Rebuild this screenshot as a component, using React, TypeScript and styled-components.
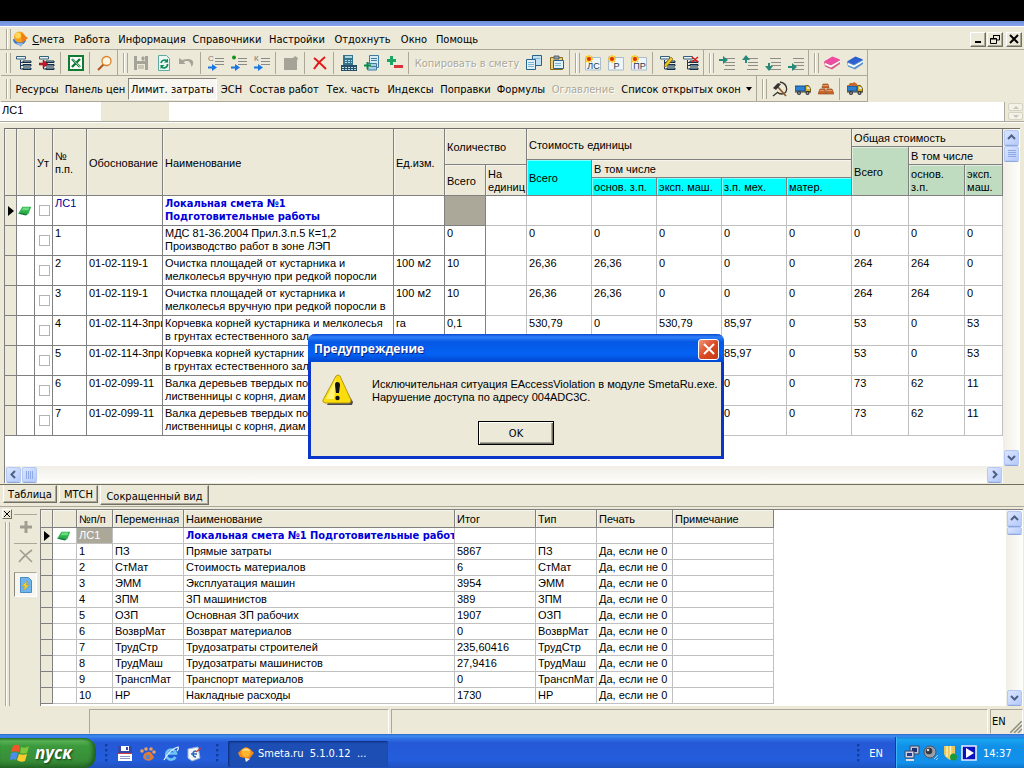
import React from "react";
import styled, { createGlobalStyle, css } from "styled-components";

const face = "#ece9d8";
const shade = "#aca899";
const uiFont = `"DejaVu Sans Condensed", "Liberation Sans", sans-serif`;
const gridFont = `"Liberation Sans", Arial, sans-serif`;

const Global = createGlobalStyle`
  *, *::before, *::after { box-sizing: border-box; }
  body { margin: 0; background: ${face}; }
  button, input { font: inherit; color: inherit; margin: 0; }
  svg { display: block; flex: none; }
`;

/* ---------- icons ---------- */

const tree = (
  <>
    <path d="M4.500 5v9H7M4.500 7.500H7M4.500 10.500H7" fill="none" stroke="#1e3a58" />
    <path d="M.500 1.500h9v2.500h-9z" fill="#eef4f6" stroke="#35607c" />
    <path d="M7 6h8v1.500H7zM7 9.500h8v1.500H7zM7 13h8v1.500H7z" fill="#a9d3e4" stroke="#142c44" />
  </>
);
const star = (
  <>
    <path d="M4 0v8M0 4h8M1 1l6 6M7 1L1 7" stroke="#ffc400" strokeWidth="1.4" />
    <circle cx="4" cy="4" r="2" fill="#e03000" />
  </>
);
const estimate = (t: string) => (
  <>
    <path d="M.500 2.500h15v12.500h-15z" fill="#eef5fb" stroke="#a9bccb" />
    <text x="8.5" y="13.5" fontSize="9" textAnchor="middle" fill="#1f3c50" fontFamily="Liberation Sans">{t}</text>
    {star}
  </>
);
const blueArrow = <path d="M0 11.500h4V9l5 3.500L4 16v-2.500H0z" fill="#1878e0" />;
const insertLines = <path d="M7 3.500h9M7 6.500h9M7 9.500h9" stroke="#8a8a86" />;
const levelLines = <path d="M5 3.500h11M6 7.500h10M6 10.500h10M5 14.500h11" stroke="#8d8d86" />;
const book = (top: string, side: string) => (
  <>
    <path d="M0 7l8-5 8 3v4l-8 5.500-7-3z" fill={side} />
    <path d="M0 6.500L8.500 1.500 16 4.500 7 9.500z" fill={top} />
    <path d="M1 8l6 2.500 9-5V7l-9 5.500L1 10z" fill="#fff" />
  </>
);
const truck = (
  <>
    <path d="M0 5h10v5H0z" fill="#2d7fd0" stroke="#174f88" />
    <path d="M10.500 4.500h3l2 3v3h-5z" fill="#d9b32c" stroke="#775f18" />
    <path d="M12 6h2l1 2h-3z" fill="#cfe8f6" />
    <path d="M0 11h16" stroke="#333" />
    <circle cx="4" cy="12" r="2" fill="#333" /><circle cx="12.5" cy="12" r="2" fill="#333" />
    <circle cx="4" cy="12" r=".8" fill="#ccc" /><circle cx="12.5" cy="12" r=".8" fill="#ccc" />
  </>
);

const icons: Record<string, React.ReactNode> = {
  app: (
    <>
      <path d="M1 8a6 5 0 0 0 13 1z" fill="#3b7bd0" />
      <path d="M4 12l5 4 2-4z" fill="#8fb5e6" />
      <circle cx="7.5" cy="6" r="5.5" fill="#f6a21c" />
      <path d="M9 2l7 5-6 5z" fill="#f07f12" />
      <circle cx="6" cy="4.5" r="3" fill="#ffd75a" />
    </>
  ),
  sun: (
    <>
      <path d="M0 7l4-4 4-2 4 2 4 4-4 5-4 4-1-4-5-1z" fill="#f08a18" />
      <circle cx="8" cy="6.500" r="4.500" fill="#ffb52e" />
      <path d="M4 5c2-3 6-3 8 0-3-1-5-1-8 0z" fill="#ffe9a0" />
      <path d="M7 12l5 1-4 3z" fill="#e4ecf8" />
    </>
  ),
  tree,
  treeInsert: <>{tree}<path d="M0 8h4V5l5 4-5 4v-3H0z" fill="#c21c2c" stroke="#7d0c1c" strokeWidth=".5" /></>,
  excel: (
    <>
      <path d="M1 1h14v14H1z" fill="#fff" stroke="#0e7a32" strokeWidth="2" />
      <path d="M4 4l8 8M12 4l-8 8" stroke="#0e7a32" strokeWidth="2.400" />
      <path d="M4 3.500l8 8.500" stroke="#fff" strokeWidth=".7" />
    </>
  ),
  find: (
    <>
      <path d="M6.500 9.500L1 15" stroke="#b5541c" strokeWidth="2" />
      <circle cx="9.500" cy="6" r="4.500" fill="#fdf6e2" stroke="#d9822b" strokeWidth="1.300" />
    </>
  ),
  save: (
    <>
      <path d="M1 1h14v14H1z" fill="#a5a297" />
      <path d="M4 1h8v5H4zM4 9h8v6H4z" fill={face} /><path d="M9 2h2v3H9zM5 11h6M5 13h6" fill="#a5a297" stroke="#a5a297" />
    </>
  ),
  refresh: (
    <>
      <path d="M2.500.500h8l3 3v12h-11z" fill="#e9f6f4" stroke="#5ea9a4" />
      <path d="M11 6a3.600 3.600 0 0 0-6 2M5.500 12a3.600 3.600 0 0 0 6-3" fill="none" stroke="#0d8a54" strokeWidth="1.600" />
      <path d="M12 3.500v4H8zM4.500 14v-4h4z" fill="#0d8a54" />
    </>
  ),
  undo: <path d="M0 3v6h6.500L4.500 7C8 5 12 6 12.500 12c4.500-6 0-10-9.500-7z" fill="#a5a297" />,
  insertC: <>{insertLines}<text x="0" y="6" fontSize="8" fill="#777" fontFamily="Liberation Sans">C</text>{blueArrow}</>,
  insertDot: <>{insertLines}<circle cx="3" cy="2.500" r="2" fill="#169016" />{blueArrow}</>,
  insertK: <>{insertLines}<text x="0" y="6" fontSize="8" fill="#777" fontFamily="Liberation Sans">К</text>{blueArrow}</>,
  edit: <path d="M1 3h9l2-2 3 2-1 3v9H1z" fill="#a5a297" />,
  remove: <path d="M2 3c4 3 8 7 12 11M13 2C9 5 5 9 2 14" fill="none" stroke="#e01818" strokeWidth="2" />,
  calc: (
    <>
      <path d="M2 0h10v10H2z" fill="#33758f" /><path d="M4 1h7v2H4z" fill="#a9d4e0" />
      <path d="M0 10h16v6H0z" fill="#274f68" />
      <path d="M1 12.500h14M1 14.500h14M4 5.500h7M4 7.500h7" stroke="#b8dbe8" strokeDasharray="2 1" />
    </>
  ),
  docPlus: (
    <>
      <path d="M5.500.500h9v12h-9z" fill="#d5ebf5" stroke="#3f7c9f" />
      <path d="M3.500 8.500h9v6.500h-9z" fill="#a8cfe3" stroke="#3f7c9f" />
      <path d="M7 3.500h6M7 5.500h6M7 11.500h5" stroke="#3f7c9f" />
      <path d="M3.500 7v7M0 10.500h7" stroke="#0d8a48" strokeWidth="2" />
    </>
  ),
  plusMinus: (
    <>
      <path d="M4.500 1v9M0 5.500h9" stroke="#1ba562" strokeWidth="3" />
      <path d="M7 10h9v3H7z" fill="#d8323c" />
    </>
  ),
  copy: (
    <>
      <path d="M6.500.500h9v10h-9z" fill="#bfe1f2" stroke="#27638a" />
      <path d="M.500 4.500h9v10h-9z" fill="#dff1fa" stroke="#27638a" />
      <path d="M2 7.500h6M2 9.500h6M2 11.500h6M8 3.500h6" stroke="#7fb4d2" />
    </>
  ),
  paste: (
    <>
      <path d="M1.500 2.500h12v12h-12z" fill="#e8cf7e" stroke="#8b6a1c" />
      <path d="M5 1h5v3H5z" fill="#90a0a8" stroke="#56646c" />
      <path d="M4.500 5.500h10v8h-10z" fill="#dff1fa" stroke="#27638a" />
      <path d="M6 8.500h6M6 10.500h6" stroke="#7fb4d2" />
    </>
  ),
  estLS: estimate("ЛС"),
  estR: estimate("Р"),
  estPR: estimate("ПР"),
  treeEdit: <>{tree}<path d="M4 12l1-3 6-7 2 2-6 7z" fill="#f4c81c" stroke="#7b5b00" strokeWidth=".6" /></>,
  treeRemove: <>{tree}<path d="M9 2l6 5M15 2L9 7" stroke="#e01818" strokeWidth="1.500" /></>,
  levelRight: <>{levelLines}<path d="M0 4h4V1l5 4-5 4V6H0z" fill="#26897a" /></>,
  levelUp: <>{levelLines}<path d="M3 8V5H0l4-5 4 5H5v3z" fill="#26897a" /></>,
  levelDown: <>{levelLines}<path d="M3 8v3H0l4 5 4-5H5V8z" fill="#26897a" /></>,
  levelIn: <>{levelLines}<path d="M0 11h4V8l5 4-5 4v-3H0z" fill="#26897a" /></>,
  bookPink: book("#f04aa2", "#d6608c"),
  bookBlue: book("#2f5fcf", "#5f93cc"),
  labor: (
    <>
      <path d="M8 1c9 2 8 12 2 12-2 0-4-1-5-2M6 11l-5 4" fill="none" stroke="#3a332a" strokeWidth="1.300" />
      <path d="M5 5l9 10" stroke="#8b5a2a" strokeWidth="1.800" />
      <path d="M1 7l5-5 3 1-5 6z" fill="#333" />
    </>
  ),
  truck,
  bricks: (
    <>
      <path d="M5 3h5l1 4H4zM0 13l2-5h5l1 5zM8 13l1-5h5l2 5z" fill="#c8672a" stroke="#8f4419" strokeWidth=".6" />
      <path d="M5 4.500h5M2 9.500h4M9 9.500h5" stroke="#e99c66" />
    </>
  ),
  truckLoaded: <>{truck}<path d="M1 5l2-3h3l1-1 3 2 1 2z" fill="#c8672a" /></>,
  flag: (
    <>
      <path d="M5 3h10l-3 8-12 0z" fill="#2fb24c" /><path d="M6 4h7l-1 3H4z" fill="#6bdc80" /><path d="M0 11l4-1 8 1-3 2z" fill="#17803a" />
    </>
  ),
  plusGray: <path d="M8 2v12M2 8h12" stroke="#a19e91" strokeWidth="3" />,
  crossGray: <path d="M2 2l12 12M14 2C10 5 5 9 1 14" stroke="#a19e91" strokeWidth="1.600" fill="none" />,
  refreshDoc: (
    <>
      <path d="M2.500.500h8l3 3v12h-11z" fill="#6db5ea" stroke="#4a8ac5" />
      <path d="M9 4L4 9h3l-2 5 6-6H8z" fill="#ffd52e" stroke="#c28a00" strokeWidth=".4" />
    </>
  ),
  floppy: (
    <>
      <path d="M1 0h14v15H1z" fill="#3547a8" /><path d="M4 0h8v5H4zM1 8h14v7H1z" fill="#fff" />
      <path d="M9 1h2v3H9z" fill="#3547a8" /><path d="M1 7.500h14" stroke="#d43c3c" /><path d="M3 10.500h10M3 12.500h10" stroke="#8c9ad0" />
    </>
  ),
  paw: (
    <>
      <path d="M4 8c4-3 6-3 8 0l2 3c-2 5-9 5-11 0z" fill="#e07a34" />
      <path d="M6 9h4v4H6z" fill="#5a86c8" />
      <circle cx="2" cy="5" r="1.800" fill="#eca05c" /><circle cx="6" cy="3" r="1.800" fill="#eca05c" />
      <circle cx="11" cy="3" r="1.800" fill="#eca05c" /><circle cx="14" cy="6" r="1.800" fill="#eca05c" />
    </>
  ),
  ie: (
    <>
      <path d="M12.500 11a5 5 0 1 1 .5-3.500H5" fill="none" stroke="#6fc3f8" strokeWidth="2.600" />
      <path d="M1 14C4 8 10 2 15 1c1 2 0 3-1 4" fill="none" stroke="#e8f4ff" strokeWidth="1.200" />
    </>
  ),
  desktop: (
    <>
      <path d="M2 3l10-2 2 11-8 3-4-3z" fill="#f2f6fb" stroke="#9db4d2" />
      <path d="M10 5a3 3 0 1 0 0 6M5 8h6" fill="none" stroke="#2869b8" strokeWidth="1.500" />
      <path d="M10 6l5-4" stroke="#c03c3c" strokeWidth="1.500" />
    </>
  ),
  network: (
    <>
      <path d="M6 1h9v8H6z" fill="#b9c5d8" stroke="#39456b" /><path d="M8 3h5v4H8z" fill="#1f2f6e" />
      <path d="M1 6h9v7H1z" fill="#c9d3e2" stroke="#39456b" /><path d="M3 8h5v3H3z" fill="#27398a" /><path d="M2 15h8" stroke="#dde" strokeWidth="2" />
    </>
  ),
  sound: (
    <>
      <circle cx="7" cy="7" r="6" fill="#9a9fa8" stroke="#4d525c" /><circle cx="6" cy="6" r="3.300" fill="#33363d" /><circle cx="5" cy="5" r="1.300" fill="#d8dce4" />
      <path d="M11 14l4-4M13 15l2-2" stroke="#a9d0f8" />
    </>
  ),
  shield: (
    <>
      <path d="M2 1h11v8c-1 3-3 4-5 6-3-2-5-3-6-6z" fill="#e9c75a" /><path d="M5 1v11M8.500 1v12" stroke="#fff2b6" strokeWidth="1.500" />
      <circle cx="11.500" cy="12" r="3.500" fill="#1d9a36" />
    </>
  ),
  play: (
    <>
      <path d="M1 1h14v14H1z" fill="#0a12c0" stroke="#e8eaff" strokeWidth="1.600" /><path d="M5 3l8 5-8 5z" fill="#fff" />
    </>
  ),
};

const Icon = ({ name, size = 16 }: { name: string; size?: number }) => (
  <svg width={size} height={size} viewBox="0 0 16 16" aria-hidden="true">{icons[name]}</svg>
);

/* ---------- shell ---------- */

const Desktop = styled.div`
  position: relative;
  display: flex;
  flex-direction: column;
  min-height: 100vh;
  overflow: hidden;
  background: ${face};
  font: 11px/13px ${uiFont};
  color: #000;
`;
const Blank = styled.div`height: 21px; background: #000;`;
const TitleEdge = styled.div`
  height: 6px;
  background: linear-gradient(#6f8fdc, #86a2ea);
  border-bottom: 1px solid #fff;
`;
const MenuBar = styled.nav`
  display: flex;
  align-items: center;
  height: 23px;
  padding: 2px 2px 0 6px;
  border-bottom: 1px solid ${shade};
`;
const Grip = styled.span`
  flex: none;
  width: 5px;
  height: 20px;
  margin-right: 1px;
  border: 1px solid ${shade};
  border-width: 0 1px;
  box-shadow: inset 1px 0 #fff;
`;
const flat = css`
  border: 0;
  padding: 0;
  background: none;
`;
const MenuItem = styled.button<{ $w: number }>`
  ${flat}
  width: ${(p) => p.$w}px;
  white-space: nowrap;
`;
const Push = styled.span`flex: 1;`;
const CaptionButton = styled.button<{ $gap?: boolean }>`
  display: grid;
  place-items: center;
  width: 16px;
  height: 15px;
  padding: 0;
  margin-left: ${(p) => (p.$gap ? 3 : 1)}px;
  background: ${face};
  border: 1px solid;
  border-color: #fff #716f64 #716f64 #fff;
  box-shadow: inset -1px -1px ${shade};
`;
const ToolRow = styled.div`
  display: flex;
  height: 26px;
  padding-left: 1px;
`;
const Band = styled.div`
  display: flex;
  align-items: center;
  padding: 1px 1px 0 5px;
  border-right: 1px solid ${shade};
  border-bottom: 1px solid ${shade};
`;
const ToolButton = styled.button<{ $w?: number; $pressed?: boolean }>`
  ${flat}
  display: flex;
  flex: none;
  align-items: center;
  justify-content: center;
  gap: 5px;
  width: ${(p) => p.$w ?? 23}px;
  height: 22px;
  white-space: nowrap;
  &:disabled { color: ${shade}; text-shadow: 1px 1px #fff; }
  ${(p) => p.$pressed && css`
    background: #f7f6f0;
    border: 1px solid;
    border-color: #8a877a #fff #fff #8a877a;
  `}
`;
const Divider = styled.span`
  flex: none;
  width: 1px;
  height: 22px;
  margin: 0 3px 0 2px;
  background: ${shade};
`;
const Caret = styled.span`
  border: 3px solid transparent;
  border-top: 4px solid #000;
  border-bottom: 0;
`;
const AddressRow = styled.div`
  display: flex;
  height: 20px;
  background: #fff;
  border-bottom: 1px solid ${shade};
`;
const AddressInput = styled.input`
  width: 101px;
  height: 16px;
  padding: 0 2px;
  border: 0;
  outline: 0;
  font-family: ${gridFont};
`;
const AddressGap = styled.span`width: 68px; background: ${face};`;
const Spinner = styled.div`
  display: flex;
  flex-direction: column;
  gap: 1px;
  width: 20px;
  padding: 1px 1px 1px 3px;
  background: ${face};
  border-left: 1px solid ${shade};
`;
const SpinButton = styled.button`
  display: grid;
  flex: 1;
  place-items: center;
  padding: 0;
  background: #f3f1e8;
  border: 1px solid #d5d2c4;
  border-radius: 2px;
`;

/* ---------- scroll bars ---------- */

const ScrollTrack = styled.div<{ $row?: boolean }>`
  display: flex;
  flex: none;
  flex-direction: ${(p) => (p.$row ? "row" : "column")};
  justify-content: space-between;
  gap: 1px;
  ${(p) => (p.$row ? "height" : "width")}: 17px;
  padding: 1px;
  background: linear-gradient(${(p) => (p.$row ? "180deg" : "90deg")}, #f0eee6, #fefefb);
`;
const ScrollPiece = styled.button<{ $h?: number }>`
  display: grid;
  place-items: center;
  width: 15px;
  height: ${(p) => p.$h ?? 15}px;
  padding: 0;
  background: linear-gradient(135deg, #dbe5ff, #b6cafa);
  border: 1px solid #b4c8f6;
  border-radius: 2px;
  box-shadow: 0 1px #8fa8dc;
`;
const arrowPath = {
  up: "M1 6l3.500-3.500L8 6",
  down: "M1 3l3.500 3.500L8 3",
  left: "M6 1L2.500 4.500 6 8",
  right: "M3 1l3.500 3.500L3 8",
};
const ScrollArrow = ({ dir }: { dir: keyof typeof arrowPath }) => (
  <ScrollPiece aria-label={dir}>
    <svg width="9" height="9" viewBox="0 0 9 9"><path d={arrowPath[dir]} fill="none" stroke="#4d6185" strokeWidth="2" /></svg>
  </ScrollPiece>
);

/* ---------- estimate grid ---------- */

const GridPanel = styled.main`
  display: flex;
  flex: 1;
  flex-direction: column;
  padding: 6px 4px 1px;
  border-bottom: 1px solid #716f64;
  box-shadow: inset 0 1px #fff;
`;
const GridFrame = styled.div`
  display: grid;
  flex: 1;
  grid-template-columns: minmax(0, 1fr) 17px;
  grid-template-rows: minmax(0, 1fr) 17px;
  background: #fff;
  border-top: 1px solid #716f64;
  border-left: 1px solid #808080;
`;
const GridViewport = styled.div`overflow: hidden;`;
const Corner = styled.div`background: ${face};`;
const Table = styled.table<{ $fill?: boolean }>`
  table-layout: fixed;
  width: ${(p) => (p.$fill ? "100%" : "733px")};
  border-collapse: separate;
  border-spacing: 0;
  font: 11px/13px ${gridFont};
`;
const HeadRow = styled.tr<{ $h: number }>`height: ${(p) => p.$h}px;`;
const Th = styled.th<{ $bg?: string }>`
  padding: 2px 0 0 2px;
  background: ${(p) => p.$bg ?? face};
  border: 1px solid #808080;
  border-width: 0 1px 1px 0;
  box-shadow: inset 1px 1px rgba(255, 255, 255, 0.5);
  font-weight: normal;
  text-align: left;
  white-space: nowrap;
  overflow: hidden;
`;
const Td = styled.td<{ $h: number; $dark?: boolean; $bg?: string; $bold?: boolean; $ink?: string }>`
  height: ${(p) => p.$h}px;
  padding: 1px 0 0 2px;
  background: ${(p) => p.$bg ?? "#fff"};
  border: 1px solid ${(p) => (p.$dark ? "#808080" : "#c0c0c0")};
  border-width: 0 1px 1px 0;
  color: ${(p) => p.$ink ?? "#000"};
  vertical-align: top;
  white-space: pre;
  overflow: hidden;
  ${(p) => p.$bold && css`font: bold 11px/13px ${uiFont};`}
`;
const MidTd = styled(Td)`
  padding: 0 0 0 1px;
  vertical-align: middle;
`;
const Tick = styled.input`
  appearance: none;
  display: block;
  width: 11px;
  height: 11px;
  margin: 0 auto;
  background: #fff;
  border: 1px solid #b4b4b4;
`;
const Pointer = styled.span`
  display: block;
  width: 6px;
  margin-left: 2px;
  border: 5px solid transparent;
  border-left: 6px solid #000;
  border-right: 0;
`;

const cyan = "#00ffff";
const green = "#c0dcc0";
const mainCols = [12, 18, 18, 34, 76, 231, 51, 41, 41, 65, 65, 65, 65, 65, 57, 56];
const clear = "Очистка площадей от кустарника и\nмелколесья вручную при редкой поросли";
const fell = "Валка деревьев твердых по\nлиственницы с корня, диам";
const mainRows: string[][] = [
  ["ЛС1", "", "Локальная смета №1\nПодготовительные работы", "", "", "", "", "", "", "", "", "", "", ""],
  ["1", "", "МДС 81-36.2004 Прил.3.п.5 К=1,2\nПроизводство работ в зоне ЛЭП", "", "0", "", "0", "0", "0", "0", "0", "0", "0", "0"],
  ["2", "01-02-119-1", clear, "100 м2", "10", "", "26,36", "26,36", "0", "0", "0", "264", "264", "0"],
  ["3", "01-02-119-1", clear + " в", "100 м2", "10", "", "26,36", "26,36", "0", "0", "0", "264", "264", "0"],
  ["4", "01-02-114-3при", "Корчевка корней кустарника и мелколесья\nв грунтах естественного зал", "га", "0,1", "", "530,79", "0", "530,79", "85,97", "0", "53", "0", "53"],
  ["5", "01-02-114-3при", "Корчевка корней кустарник\nв грунтах естественного зал", "", "", "", "", "", "", "85,97", "0", "53", "0", "53"],
  ["6", "01-02-099-11", fell, "", "", "", "", "", "", "0", "0", "73", "62", "11"],
  ["7", "01-02-099-11", fell, "", "", "", "", "", "", "0", "0", "73", "62", "11"],
];

const EstimateTable = () => (
  <Table $fill>
    <colgroup>
      {mainCols.map((w, i) => <col key={i} style={{ width: w }} />)}
      <col />
    </colgroup>
    <thead>
      <HeadRow $h={18}>
        <Th rowSpan={5} /><Th rowSpan={5} />
        <Th rowSpan={5}>Ут</Th>
        <Th rowSpan={5}>№<br />п.п.</Th>
        <Th rowSpan={5}>Обоснование</Th>
        <Th rowSpan={5}>Наименование</Th>
        <Th rowSpan={5}>Ед.изм.</Th>
        <Th rowSpan={3} colSpan={2}>Количество</Th>
        <Th rowSpan={2} colSpan={5}>Стоимость единицы</Th>
        <Th colSpan={3}>Общая стоимость</Th>
      </HeadRow>
      <HeadRow $h={13}>
        <Th rowSpan={4} $bg={green}>Всего</Th>
        <Th rowSpan={2} colSpan={2}>В том числе</Th>
      </HeadRow>
      <HeadRow $h={5}>
        <Th rowSpan={3} $bg={cyan}>Всего</Th>
        <Th rowSpan={2} colSpan={4}>В том числе</Th>
      </HeadRow>
      <HeadRow $h={13}>
        <Th rowSpan={2}>Всего</Th>
        <Th rowSpan={2}>На<br />единиц</Th>
        <Th rowSpan={2} $bg={green}>основ.<br />з.п.</Th>
        <Th rowSpan={2} $bg={green}>эксп.<br />маш.</Th>
      </HeadRow>
      <HeadRow $h={18}>
        <Th $bg={cyan}>основ. з.п.</Th>
        <Th $bg={cyan}>эксп. маш.</Th>
        <Th $bg={cyan}>з.п. мех.</Th>
        <Th $bg={cyan}>матер.</Th>
      </HeadRow>
    </thead>
    <tbody>
      {mainRows.map((row, r) => (
        <tr key={r}>
          <MidTd $h={30} $dark $bg={face}>{r === 0 && <Pointer />}</MidTd>
          <MidTd $h={30} $dark>{r === 0 && <Icon name="flag" size={14} />}</MidTd>
          <MidTd $h={30} $dark><Tick type="checkbox" aria-label={`Ут ${row[0]}`} /></MidTd>
          {row.map((v, c) => (
            <Td
              key={c}
              $h={30}
              $dark={c < 5}
              $bg={r === 0 && c === 4 ? shade : undefined}
              $ink={r === 0 ? (c === 2 ? "#0000d8" : "#0000a0") : undefined}
              $bold={r === 0 && c === 2}
            >
              {v}
            </Td>
          ))}
        </tr>
      ))}
    </tbody>
  </Table>
);

/* ---------- tabs and limit costs ---------- */

const Tabs = styled.div`
  display: flex;
  align-items: flex-start;
  gap: 2px;
  height: 22px;
  padding-left: 3px;
  border-bottom: 1px solid ${shade};
  box-shadow: inset 0 -1px ${face};
`;
const Tab = styled.button<{ $w: number; $active?: boolean }>`
  width: ${(p) => p.$w}px;
  height: ${(p) => (p.$active ? 20 : 18)}px;
  padding: ${(p) => (p.$active ? 3 : 0)}px 0 0;
  background: ${face};
  border: 1px solid;
  border-color: transparent #716f64 #716f64 #fff;
  box-shadow: inset -1px -1px ${shade};
  white-space: nowrap;
`;
const Lower = styled.section`
  display: flex;
  padding: 2px 1px 0 0;
`;
const DockEdge = styled.div`
  display: flex;
  flex-direction: column;
  align-items: center;
  gap: 3px;
  width: 14px;
`;
const DockClose = styled.button`
  display: grid;
  place-items: center;
  width: 10px;
  height: 10px;
  padding: 0;
  background: ${face};
  border: 1px solid;
  border-color: #fff #716f64 #716f64 #fff;
`;
const DockGrip = styled.span`
  flex: 1;
  width: 5px;
  border: 1px solid ${shade};
  border-width: 0 1px;
  box-shadow: inset 1px 0 #fff;
`;
const SideTools = styled.div`
  display: flex;
  flex-direction: column;
  gap: 4px;
  width: 26px;
  padding: 5px 1px 0 0;
`;
const SideButton = styled(ToolButton)`
  border-top: 1px solid ${shade};
  height: 25px;
`;
const LowerFrame = styled.div`
  display: flex;
  flex: 1;
  min-width: 0;
  background: #fff;
  border-top: 1px solid #808080;
  border-left: 1px solid #808080;
`;
const LowerView = styled.div`
  flex: 1;
  min-width: 0;
  overflow: hidden;
  padding-bottom: 2px;
`;
const Flag = styled.span`display: block; padding-left: 3px;`;

const lowCols = [12, 24, 36, 71, 271, 81, 61, 76, 101];
const lowRows: [string, string, string][] = [
  ["ПЗ", "Прямые затраты", "5867"],
  ["СтМат", "Стоимость материалов", "6"],
  ["ЭММ", "Эксплуатация машин", "3954"],
  ["ЗПМ", "ЗП машинистов", "389"],
  ["ОЗП", "Основная ЗП рабочих", "1907"],
  ["ВозврМат", "Возврат материалов", "0"],
  ["ТрудСтр", "Трудозатраты строителей", "235,60416"],
  ["ТрудМаш", "Трудозатраты машинистов", "27,9416"],
  ["ТранспМат", "Транспорт материалов", "0"],
  ["НР", "Накладные расходы", "1730"],
];

const LimitTable = () => (
  <Table>
    <colgroup>{lowCols.map((w, i) => <col key={i} style={{ width: w }} />)}</colgroup>
    <thead>
      <HeadRow $h={18}>
        <Th /><Th />
        <Th>№п/п</Th><Th>Переменная</Th><Th>Наименование</Th><Th>Итог</Th><Th>Тип</Th><Th>Печать</Th><Th>Примечание</Th>
      </HeadRow>
    </thead>
    <tbody>
      <tr>
        <MidTd $h={16} $dark $bg={face}><Pointer /></MidTd>
        <MidTd $h={16}><Flag><Icon name="flag" size={14} /></Flag></MidTd>
        <Td $h={16} $bg={shade} $ink="#fff">ЛС1</Td>
        <Td $h={16} />
        <Td $h={16} $bold $ink="#0000d8">Локальная смета №1 Подготовительные работы</Td>
        <Td $h={16} /><Td $h={16} /><Td $h={16} /><Td $h={16} />
      </tr>
      {lowRows.map(([code, title, sum], i) => (
        <tr key={code}>
          <Td $h={16} $dark $bg={face} />
          <Td $h={16} />
          <Td $h={16}>{i + 1}</Td>
          <Td $h={16}>{code}</Td>
          <Td $h={16}>{title}</Td>
          <Td $h={16}>{sum}</Td>
          <Td $h={16}>{code}</Td>
          <Td $h={16}>Да, если не 0</Td>
          <Td $h={16} />
        </tr>
      ))}
    </tbody>
  </Table>
);

const StatusBar = styled.footer`
  display: flex;
  gap: 2px;
  height: 28px;
  padding: 3px 1px 0 89px;
`;
const StatusCell = styled.div<{ $w?: number }>`
  display: flex;
  align-items: center;
  justify-content: space-between;
  ${(p) => (p.$w ? `width: ${p.$w}px` : "flex: 1")};
  padding-left: 1px;
  border: 1px solid;
  border-color: ${shade} #fff ${face} ${shade};
`;
const Resize = styled.span`align-self: flex-end;`;

/* ---------- task bar ---------- */

const TaskBar = styled.div`
  display: flex;
  height: 34px;
  background: linear-gradient(#2a66c8 0, #3f8cf0 2px, #2f6fe2 5px, #2458d6 9px, #245edc 26px, #1f50be);
  color: #fff;
`;
const Start = styled.button`
  display: flex;
  align-items: center;
  gap: 5px;
  align-self: flex-end;
  width: 96px;
  height: 30px;
  padding: 0 0 0 10px;
  border: 0;
  border-radius: 0 12px 12px 0;
  background: linear-gradient(#2f7d2e, #58b254 3px, #3c9a3c 8px, #388e38 22px, #2a732b);
  box-shadow: inset -3px -1px 4px #1d5c1f;
  color: #fff;
  font: italic bold 17px/22px "Open Sans", sans-serif;
  text-shadow: 1px 1px 2px #123a12;
`;
const TaskGroup = styled.div<{ $gap: number }>`
  display: flex;
  align-items: center;
  gap: ${(p) => p.$gap}px;
  padding-top: 5px;
`;
const Dots = styled.span<{ $wide?: boolean }>`
  width: 4px;
  height: 20px;
  margin: 0 8px;
  margin-left: ${(p) => (p.$wide ? 14 : 9)}px;
  background: radial-gradient(circle at 1px 1px, #153c9c 1px, transparent 2px) 0 0 / 4px 5px;
`;
const QuickButton = styled.button`${flat}`;
const TaskButton = styled.button`
  display: flex;
  align-items: center;
  gap: 4px;
  width: 160px;
  height: 26px;
  padding: 0 0 0 10px;
  border: 0;
  border-radius: 2px;
  background: #1c4eb4;
  box-shadow: inset 1px 1px 2px #0c2c78;
`;
const Tray = styled.div`
  display: flex;
  align-items: center;
  gap: 3px;
  align-self: flex-end;
  width: 129px;
  height: 31px;
  padding-left: 8px;
  background: linear-gradient(#1a8ad8, #19a4f2 3px, #1190e8 9px, #1290ea 26px, #0f74c8);
  border-left: 1px solid #0a3f8c;
  box-shadow: inset 1px 0 #3fb4f8;
`;
const Lang = styled.span`margin-right: 12px;`;
const Clock = styled.time`padding: 1px 0 0 3px;`;

/* ---------- message box ---------- */

const Dialog = styled.div`
  position: absolute;
  left: 308px;
  top: 334px;
  width: 416px;
  border: 3px solid #0a35c8;
  border-top: 0;
  border-radius: 7px 7px 0 0;
  background: ${face};
`;
const DialogTitle = styled.div`
  display: flex;
  align-items: center;
  justify-content: space-between;
  height: 28px;
  margin: 0 -3px;
  padding: 2px 5px 0 6px;
  border-radius: 7px 7px 0 0;
  background: linear-gradient(#0a48d0, #2f80f8 3px, #0458e4 8px, #0462f4 20px, #0146d0);
  color: #fff;
  font: bold 12px/16px "Open Sans", sans-serif;
  text-shadow: 1px 1px #0a1e7a;
`;
const DialogClose = styled.button`
  display: grid;
  place-items: center;
  width: 21px;
  height: 21px;
  padding: 0;
  border: 1px solid #fff;
  border-radius: 3px;
  background: linear-gradient(135deg, #f0967c, #dc4a24 50%, #c03a14);
`;
const DialogBody = styled.div`
  display: grid;
  grid-template-columns: 32px 1fr;
  column-gap: 18px;
  padding: 12px 0 0 11px;
`;
const Message = styled.p`
  margin: 0;
  padding-top: 4px;
  font-family: ${gridFont};
  white-space: nowrap;
`;
const DialogActions = styled.div`
  display: flex;
  justify-content: center;
  padding: 15px 0 11px;
`;
const OkButton = styled.button`
  width: 76px;
  height: 24px;
  padding: 0;
  background: ${face};
  border: 1px solid #000;
  box-shadow: inset 1px 1px #fff, inset -1px -1px #716f64, inset -2px -2px ${shade};
`;

const menu: [string, number][] = [
  ["Работа", 46], ["Информация", 74], ["Справочники", 76], ["Настройки", 64], ["Отдохнуть", 67], ["Окно", 36], ["Помощь", 50],
];
const toolBands: string[][] = [
  ["tree", "treeInsert", "|", "excel", "|", "find"],
  ["save", "refresh", "undo", "|", "insertC", "insertDot", "insertK", "|", "edit", "|", "remove", "|", "calc", "docPlus", "plusMinus", "|", "#", "copy", "paste"],
  ["estLS", "estR", "estPR", "|", "treeEdit", "treeRemove"],
  ["levelRight", "levelUp", "levelDown", "levelIn"],
  ["bookPink", "bookBlue"],
];
const pages: [string, number][] = [
  ["Ресурсы", 50], ["Панель цен", 66], ["Лимит. затраты", 89], ["ЭСН", 29], ["Состав работ", 76], ["Тех. часть", 62],
  ["Индексы", 53], ["Поправки", 57], ["Формулы", 54], ["Оглавление", 70], ["Список открытых окон", 137],
];

const ToolItem = ({ id }: { id: string }) => {
  if (id === "|") return <Divider />;
  if (id === "#") return <ToolButton $w={110} disabled>Копировать в смету</ToolButton>;
  return <ToolButton aria-label={id}><Icon name={id} /></ToolButton>;
};

export default function App() {
  return (
    <Desktop>
      <Global />
      <Blank />
      <TitleEdge />
      <MenuBar>
        <Grip />
        <Icon name="app" />
        <MenuItem $w={41}><u>С</u>мета</MenuItem>
        {menu.map(([t, w]) => <MenuItem key={t} $w={w}>{t}</MenuItem>)}
        <Push />
        <CaptionButton aria-label="Свернуть"><svg width="10" height="10"><path d="M2 8h6" stroke="#000" strokeWidth="2" /></svg></CaptionButton>
        <CaptionButton aria-label="Восстановить">
          <svg width="10" height="10"><path d="M3.500 4V1.500h6V6H7M3 1.500h7M.5 4.500h6v5h-6zM0 5h7" fill="none" stroke="#000" /></svg>
        </CaptionButton>
        <CaptionButton $gap aria-label="Закрыть"><svg width="10" height="10"><path d="M1 1l8 8M9 1L1 9" stroke="#000" strokeWidth="2" /></svg></CaptionButton>
      </MenuBar>
      <ToolRow>
        {toolBands.map((band, i) => (
          <Band key={i}><Grip />{band.map((id, j) => <ToolItem key={j} id={id} />)}</Band>
        ))}
      </ToolRow>
      <ToolRow>
        <Band>
          <Grip />
          {pages.map(([t, w], i) => (
            <ToolButton key={t} $w={w} $pressed={i === 2} disabled={i === 9}>{t}{i === 10 && <Caret />}</ToolButton>
          ))}
        </Band>
        <Band>
          <Grip />
          {["labor", "truck", "bricks", "|", "truckLoaded"].map((id) => <ToolItem key={id} id={id} />)}
        </Band>
      </ToolRow>
      <AddressRow>
        <AddressInput aria-label="Ячейка" defaultValue="ЛС1" />
        <AddressGap />
        <Push />
        <Spinner>
          <SpinButton aria-label="Больше"><svg width="6" height="3"><path d="M0 3l3-3 3 3z" fill="#c9c6b8" /></svg></SpinButton>
          <SpinButton aria-label="Меньше"><svg width="6" height="3"><path d="M0 0l3 3 3-3z" fill="#c9c6b8" /></svg></SpinButton>
        </Spinner>
      </AddressRow>

      <GridPanel>
        <GridFrame>
          <GridViewport><EstimateTable /></GridViewport>
          <ScrollTrack>
            <ScrollArrow dir="up" />
            <ScrollPiece aria-label="Бегунок"><svg width="8" height="8"><path d="M0 .5h8M0 2.500h8M0 4.500h8M0 6.500h8" stroke="#8fa9e6" /></svg></ScrollPiece>
            <Push />
            <ScrollArrow dir="down" />
          </ScrollTrack>
          <ScrollTrack $row>
            <ScrollArrow dir="left" />
            <ScrollPiece aria-label="Бегунок"><svg width="8" height="8"><path d="M.5 0v8M2.500 0v8M4.500 0v8M6.500 0v8" stroke="#8fa9e6" /></svg></ScrollPiece>
            <Push />
            <ScrollArrow dir="right" />
          </ScrollTrack>
          <Corner />
        </GridFrame>
      </GridPanel>

      <Tabs>
        <Tab $w={54}>Таблица</Tab>
        <Tab $w={39}>МТСН</Tab>
        <Tab $w={109} $active>Сокращенный вид</Tab>
      </Tabs>
      <Lower>
        <DockEdge>
          <DockClose aria-label="Закрыть панель"><svg width="6" height="6"><path d="M0 0l6 6M6 0L0 6" stroke="#000" /></svg></DockClose>
          <DockGrip />
        </DockEdge>
        <SideTools>
          <SideButton aria-label="Добавить"><Icon name="plusGray" /></SideButton>
          <SideButton aria-label="Удалить"><Icon name="crossGray" /></SideButton>
          <SideButton $pressed aria-label="Пересчитать"><Icon name="refreshDoc" /></SideButton>
        </SideTools>
        <LowerFrame>
          <LowerView><LimitTable /></LowerView>
          <ScrollTrack>
            <ScrollArrow dir="up" />
            <ScrollPiece $h={7} aria-label="Бегунок" />
            <Push />
            <ScrollArrow dir="down" />
          </ScrollTrack>
        </LowerFrame>
      </Lower>
      <StatusBar>
        <StatusCell $w={300} />
        <StatusCell />
        <StatusCell $w={33}>
          EN
          <Resize><svg width="12" height="12"><path d="M0 12L12 0M4 12l8-8M8 12l4-4" stroke="#8f8c7f" strokeWidth="1.500" /></svg></Resize>
        </StatusCell>
      </StatusBar>

      <TaskBar>
        <Start>
          <svg width="20" height="20" viewBox="0 0 20 20">
            <path d="M3 3c3-2 5-1 7 0L9 9C6 8 4 8 1 9z" fill="#f0562a" />
            <path d="M11 4c3 1 5 1 8-1l-2 7c-3 1-5 1-7 0z" fill="#7cc83a" />
            <path d="M1 10c3-1 5-1 7 0l-2 7c-2-1-4-1-6 0z" fill="#4a8cf0" />
            <path d="M9 11c3 1 5 1 8 0l-2 7c-3 1-5 1-8-1z" fill="#fccc2c" />
          </svg>
          пуск
        </Start>
        <TaskGroup $gap={0}><Dots /></TaskGroup>
        <TaskGroup $gap={7}>
          {["floppy", "paw", "ie", "desktop"].map((n) => <QuickButton key={n} aria-label={n}><Icon name={n} /></QuickButton>)}
        </TaskGroup>
        <TaskGroup $gap={0}>
          <Dots $wide />
          <TaskButton><Icon name="sun" />Smeta.ru&nbsp; 5.1.0.12&nbsp; ...</TaskButton>
        </TaskGroup>
        <Push />
        <TaskGroup $gap={0}><Dots /><Lang>EN</Lang></TaskGroup>
        <Tray>
          {["network", "sound", "shield", "play"].map((n) => <Icon key={n} name={n} />)}
          <Clock>14:37</Clock>
        </Tray>
      </TaskBar>

      <Dialog role="alertdialog" aria-labelledby="warn-title">
        <DialogTitle>
          <span id="warn-title">Предупреждение</span>
          <DialogClose aria-label="Закрыть"><svg width="12" height="12"><path d="M1 1l10 10M11 1L1 11" stroke="#fff" strokeWidth="2" /></svg></DialogClose>
        </DialogTitle>
        <DialogBody>
          <svg width="32" height="32" viewBox="0 0 32 32">
            <path d="M17 4l14 24-1 3H5z" fill="#4a4a5c" />
            <path d="M14 2q2-2 4 0l11 24q0 3-2 3H3q-3-1-2-3z" fill="#fbdc0c" stroke="#b59a10" />
            <path d="M14 4L4 25h8z" fill="#fff27a" />
            <path d="M15 8q3 0 3 3l-1 8h-3l-1-8q0-3 2-3z" fill="#111" /><circle cx="15.500" cy="24" r="2.200" fill="#111" />
          </svg>
          <Message>Исключительная ситуация EAccessViolation в модуле SmetaRu.exe.<br />Нарушение доступа по адресу 004ADC3C.</Message>
        </DialogBody>
        <DialogActions><OkButton>OK</OkButton></DialogActions>
      </Dialog>
    </Desktop>
  );
}
